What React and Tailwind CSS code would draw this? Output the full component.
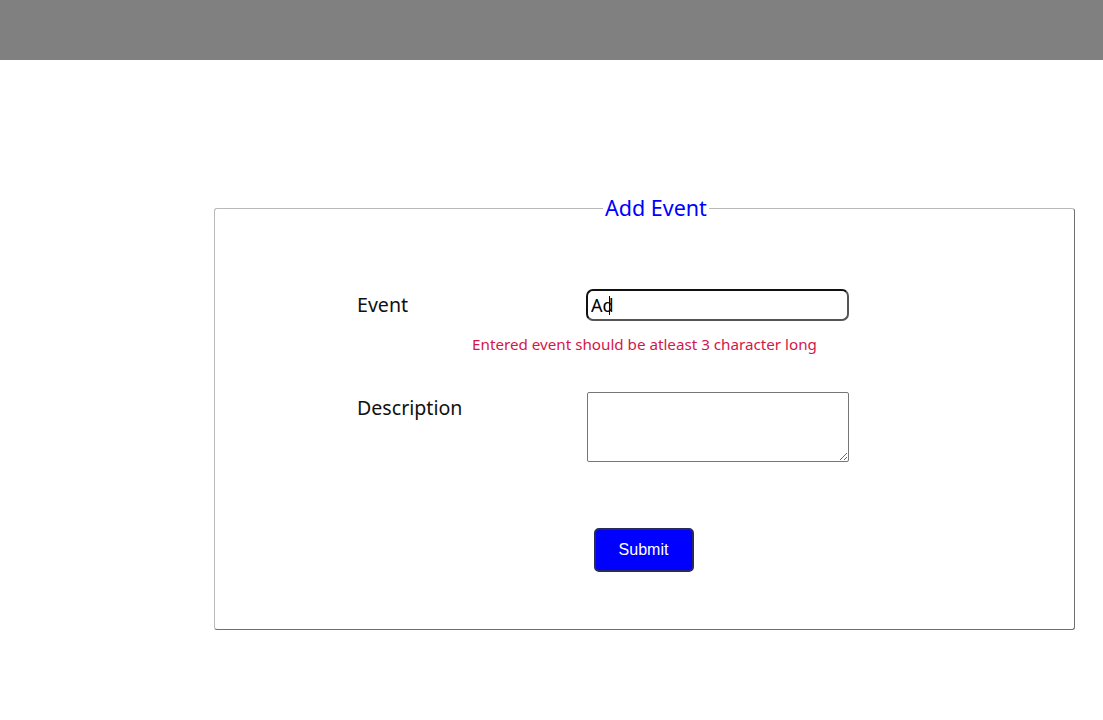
import { useState } from 'react';

function App() {
  const [eventName, setEventName] = useState('Ad');
  const [description, setDescription] = useState('');

  const showError = eventName.length < 3;

  return (
    <div className="min-h-screen bg-white" style={{ fontFamily: '"Noto Sans", "Open Sans", sans-serif' }}>
      {/* Header */}
      <div className="h-[60px] bg-[#808080]"></div>

      {/* Form */}
      <div className="pt-[133px] pl-[214px] pr-[28px]">
        <fieldset className="border border-t-[#b9b9b9] border-l-[#b9b9b9] border-r-[#6f6f6f] border-b-[#6f6f6f] rounded-[3px] pb-[57px]">
          <legend className="ml-[388px] px-[2px] text-[21.5px] leading-[30px] text-[#0000ff]">Add Event</legend>

          <div className="pt-[66px]">
            {/* Event row */}
            <div className="flex items-center">
              <label className="w-[229px] pl-[142px] text-[19.6px] text-[#111] box-content">Event</label>
              <div className="relative">
                <input
                  type="text"
                  value={eventName}
                  onChange={(e) => setEventName(e.target.value)}
                  className="w-[263px] h-[32px] border-2 border-t-[#111] border-l-[#111] border-r-[#555] border-b-[#555] rounded-[7px] px-[3px] text-[18px] text-black outline-none"
                />
                <span className="absolute left-[23px] top-[7px] w-px h-[19px] bg-black"></span>
              </div>
            </div>

            {showError && (
              <p className="mt-[12px] text-center text-[15.2px] text-[#d4164a]">Entered event should be atleast 3 character long</p>
            )}

            {/* Description row */}
            <div className="flex items-start mt-[36px]">
              <label className="w-[229px] pl-[142px] pt-[1px] text-[19.6px] text-[#111] box-content">Description</label>
              <textarea
                value={description}
                onChange={(e) => setDescription(e.target.value)}
                className="ml-px w-[262px] h-[70px] border border-[#767676] rounded-[2px] resize outline-none"
              ></textarea>
            </div>

            {/* Submit */}
            <div className="flex justify-center mt-[66px] pr-[2px]">
              <button
                className="w-[100px] h-[44px] bg-[#0000ff] text-white text-[16px] border-2 border-[#2a2a5a] rounded-[5px]"
                style={{ fontFamily: '"Liberation Sans", Arial, sans-serif' }}
              >
                Submit
              </button>
            </div>
          </div>
        </fieldset>
      </div>
    </div>
  );
}

export default App;
